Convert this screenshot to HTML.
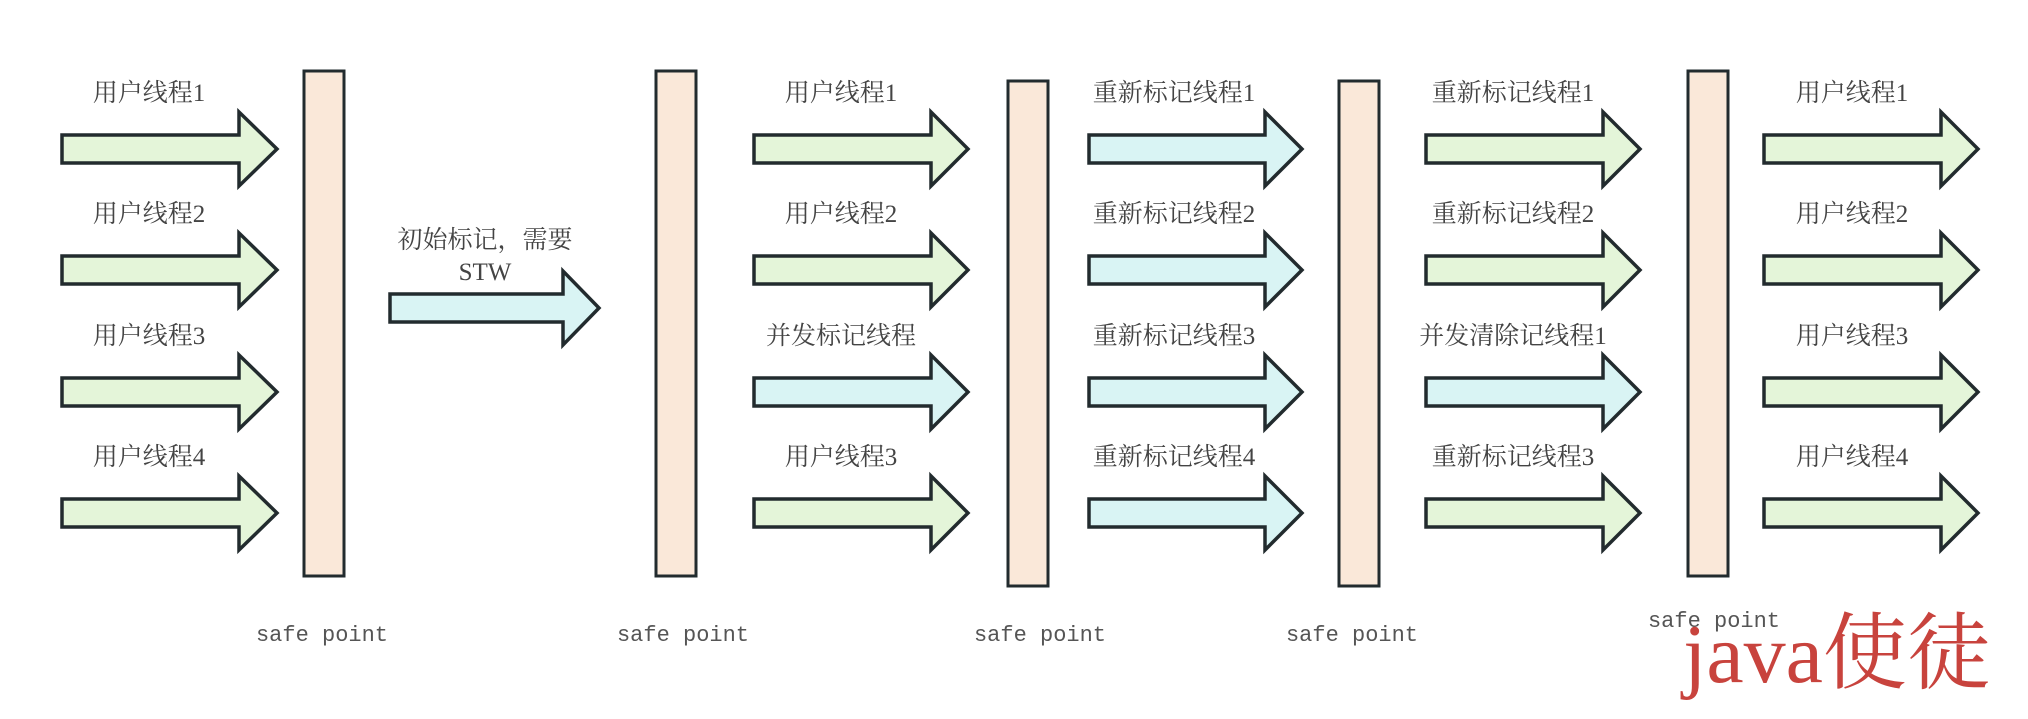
<!DOCTYPE html>
<html><head><meta charset="utf-8"><style>
html,body{margin:0;padding:0;background:#fff;width:2028px;height:719px;overflow:hidden}
svg{display:block}
.l{font-family:"Liberation Serif","Noto Serif CJK SC","Noto Sans CJK SC",serif;font-size:25px;fill:#444}
.sp{font-family:"Liberation Mono","DejaVu Sans Mono",monospace;font-size:22px;fill:#555}
</style></head><body>
<svg width="2028" height="719" viewBox="0 0 2028 719" xmlns="http://www.w3.org/2000/svg">
<g stroke="#222b2e" stroke-width="3" stroke-linejoin="miter">
<rect x="304" y="71" width="40" height="505" fill="#fae8d9"/>
<rect x="656" y="71" width="40" height="505" fill="#fae8d9"/>
<rect x="1008" y="81" width="40" height="505" fill="#fae8d9"/>
<rect x="1339" y="81" width="40" height="505" fill="#fae8d9"/>
<rect x="1688" y="71" width="40" height="505" fill="#fae8d9"/>
</g>
<g stroke="#222b2e" stroke-width="3.5" stroke-linejoin="miter">
<g fill="#e4f5d9">
<path d="M62,135 H239 V112 L277,149 L239,186 V163 H62 Z"/>
<path d="M62,256 H239 V233 L277,270 L239,307 V284 H62 Z"/>
<path d="M62,378 H239 V355 L277,392 L239,429 V406 H62 Z"/>
<path d="M62,499 H239 V476 L277,513 L239,550 V527 H62 Z"/>
<path d="M754,135 H931 V112 L968,149 L931,186 V163 H754 Z"/>
<path d="M754,256 H931 V233 L968,270 L931,307 V284 H754 Z"/>
<path d="M754,499 H931 V476 L968,513 L931,550 V527 H754 Z"/>
<path d="M1426,135 H1603 V112 L1640,149 L1603,186 V163 H1426 Z"/>
<path d="M1426,256 H1603 V233 L1640,270 L1603,307 V284 H1426 Z"/>
<path d="M1426,499 H1603 V476 L1640,513 L1603,550 V527 H1426 Z"/>
<path d="M1764,135 H1941 V112 L1978,149 L1941,186 V163 H1764 Z"/>
<path d="M1764,256 H1941 V233 L1978,270 L1941,307 V284 H1764 Z"/>
<path d="M1764,378 H1941 V355 L1978,392 L1941,429 V406 H1764 Z"/>
<path d="M1764,499 H1941 V476 L1978,513 L1941,550 V527 H1764 Z"/>
</g>
<g fill="#d9f4f4">
<path d="M390,294 H563 V271 L599,308 L563,345 V322 H390 Z"/>
<path d="M754,378 H931 V355 L968,392 L931,429 V406 H754 Z"/>
<path d="M1089,135 H1265 V112 L1302,149 L1265,186 V163 H1089 Z"/>
<path d="M1089,256 H1265 V233 L1302,270 L1265,307 V284 H1089 Z"/>
<path d="M1089,378 H1265 V355 L1302,392 L1265,429 V406 H1089 Z"/>
<path d="M1089,499 H1265 V476 L1302,513 L1265,550 V527 H1089 Z"/>
<path d="M1426,378 H1603 V355 L1640,392 L1603,429 V406 H1426 Z"/>
</g>
</g>
<g class="l" text-anchor="middle">
<text x="149" y="101">用户线程1</text>
<text x="149" y="222">用户线程2</text>
<text x="149" y="344">用户线程3</text>
<text x="149" y="465">用户线程4</text>
<text x="485" y="248">初始标记，需要</text>
<text x="485" y="280">STW</text>
<text x="841" y="101">用户线程1</text>
<text x="841" y="222">用户线程2</text>
<text x="841" y="344">并发标记线程</text>
<text x="841" y="465">用户线程3</text>
<text x="1174" y="101">重新标记线程1</text>
<text x="1174" y="222">重新标记线程2</text>
<text x="1174" y="344">重新标记线程3</text>
<text x="1174" y="465">重新标记线程4</text>
<text x="1513" y="101">重新标记线程1</text>
<text x="1513" y="222">重新标记线程2</text>
<text x="1513" y="344">并发清除记线程1</text>
<text x="1513" y="465">重新标记线程3</text>
<text x="1852" y="101">用户线程1</text>
<text x="1852" y="222">用户线程2</text>
<text x="1852" y="344">用户线程3</text>
<text x="1852" y="465">用户线程4</text>
</g>
<g class="sp" text-anchor="middle">
<text x="322" y="641">safe point</text>
<text x="683" y="641">safe point</text>
<text x="1040" y="641">safe point</text>
<text x="1352" y="641">safe point</text>
<text x="1714" y="627">safe point</text>
</g>
<text x="1683" y="682" fill="#c8433d" style="font-family:'Liberation Serif','Noto Serif CJK SC',serif;font-size:84px">java使徒</text>
</svg>
</body></html>
